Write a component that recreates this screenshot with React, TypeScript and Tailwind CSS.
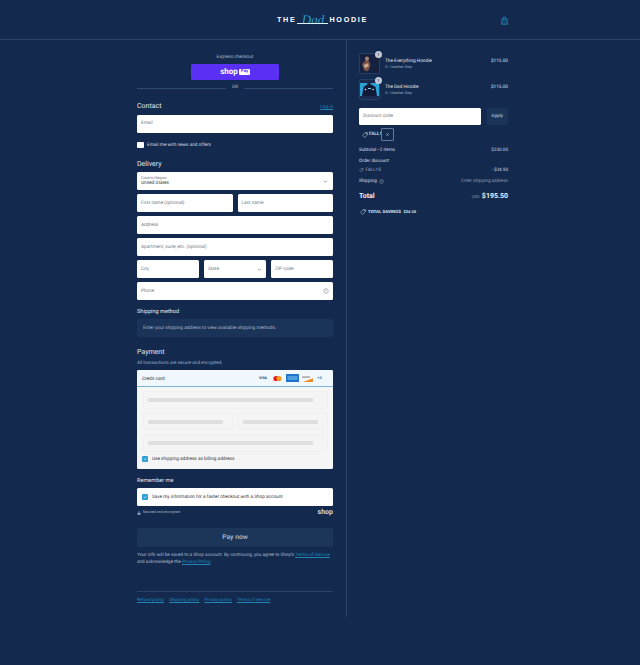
import React from "react";

const font = "font-['Roboto','Liberation_Sans',sans-serif]";

function Field({ label, className = "", children }: { label?: string; className?: string; children?: React.ReactNode }) {
  return (
    <div className={`h-[17.5px] bg-white rounded-[1.5px] flex items-center justify-between px-[4px] text-[4.7px] leading-[6px] text-[#73777d] ${className}`}>
      <span className="pt-[1px]">{label}</span>
      {children}
    </div>
  );
}

function Chevron() {
  return (
    <svg width="5" height="5" viewBox="0 0 10 10" fill="none" stroke="#777" strokeWidth="1.4">
      <path d="M2 3.5 5 6.5 8 3.5" />
    </svg>
  );
}

function Tag({ color = "#cdd6e4", size = 5 }: { color?: string; size?: number }) {
  return (
    <svg width={size} height={size} viewBox="0 0 12 12" fill="none" stroke={color} strokeWidth="1.1">
      <path d="M6.5 1.2h4.3v4.3L5.4 10.9 1.1 6.6z" />
      <circle cx="8.6" cy="3.4" r=".7" />
    </svg>
  );
}

function Check() {
  return (
    <span className="w-[6px] h-[6px] shrink-0 rounded-[1px] bg-[#2f9fd8] flex items-center justify-center">
      <svg width="4" height="4" viewBox="0 0 10 10" fill="none" stroke="#fff" strokeWidth="1.6">
        <path d="M2 5.2 4.2 7.4 8.2 2.8" />
      </svg>
    </span>
  );
}

function Skeleton({ w, className = "" }: { w: string; className?: string }) {
  return (
    <div className={`h-[17.5px] border border-[#f0f0f0] rounded-[1.5px] flex items-center px-[4px] ${className}`}>
      <div className={`h-[4px] bg-[#dfdfdf] rounded-[1px] ${w}`} />
    </div>
  );
}

function Item({ name, badge, thumb }: { name: string; badge: string; thumb: React.ReactNode }) {
  return (
    <div className="flex items-start h-[26px]">
      <div className="relative w-[21px] h-[21px] border border-[#23406b] rounded-[1.5px]">
        {thumb}
        <span className="absolute -top-[3px] -right-[3px] w-[7px] h-[7px] rounded-full bg-[#c3cad4] text-[#33415a] text-[4px] leading-[7px] text-center font-semibold">
          {badge}
        </span>
      </div>
      <div className="ml-[5px] mt-[5px] flex-1">
        <div className="text-[4.7px] leading-[7px] text-[#e3e8f0]">{name}</div>
        <div className="text-[3.7px] leading-[5px] text-[#9aa8bd] mt-[0.5px]">S / Heather Grey</div>
      </div>
      <div className="mt-[5px] text-[4.7px] leading-[7px] text-[#dfe5ee]">$115.00</div>
    </div>
  );
}

function SumRow({ left, right, className = "" }: { left: React.ReactNode; right: React.ReactNode; className?: string }) {
  return (
    <div className={`flex justify-between items-center text-[4.6px] leading-[7px] ${className}`}>
      <span className="flex items-center gap-[2px]">{left}</span>
      <span>{right}</span>
    </div>
  );
}

export default function App() {
  return (
    <div className={`w-[640px] h-[665px] bg-[#132a4e] text-[#dbe2ec] overflow-hidden [text-rendering:geometricPrecision] ${font}`}>
      {/* Header */}
      <header className="relative h-[40px] border-b border-[#2a4468] flex items-center justify-center pl-[5px]">
        <div className="flex items-center text-white font-bold text-[7.2px] tracking-[1.7px] leading-none font-['Liberation_Sans',sans-serif]">
          <span>THE</span>
          <span className="relative w-[31px] mx-[1px] h-[16px] flex items-center justify-center">
            <span className="font-['Liberation_Serif',serif] italic font-normal text-[13px] tracking-normal text-[#2c9ccb]">Dad</span>
            <span className="absolute left-0 right-0 top-[11.5px] h-[0.7px] bg-[#dff2fb]" />
          </span>
          <span>HOODIE</span>
        </div>
        <svg className="absolute left-[500.5px] top-[15.5px]" width="7" height="9" viewBox="0 0 14 18" fill="none" stroke="#1f86b9" strokeWidth="1.5">
          <path d="M1.8 5.5h10.4l.8 11H1z" fill="#1f86b9" fillOpacity=".3" />
          <path d="M4.5 7V3.8a2.5 2.5 0 0 1 5 0V7" />
        </svg>
      </header>

      <div className="flex h-[577px]">
        {/* Left column */}
        <main className="w-[347px] pl-[137px] pr-[13px] border-r border-[#2a4468]">
          <div className="text-center text-[4.7px] leading-[7px] text-[#aeb9c9] mt-[13.5px]">Express checkout</div>
          <div className="mx-auto mt-[3.5px] w-[88px] h-[16px] rounded-[1.5px] bg-[#5a31f4] flex items-center justify-center gap-[1.5px]">
            <span className="text-white font-bold text-[8px] leading-none">shop</span>
            <span className="bg-white text-[#5a31f4] rounded-[1px] px-[1.5px] text-[4.5px] leading-[6px] font-bold">Pay</span>
          </div>
          <div className="flex items-center gap-[6px] mt-[5px] h-[7px]">
            <div className="flex-1 h-px bg-[#2f4a70]" />
            <span className="text-[4.7px] leading-none text-[#aeb9c9]">OR</span>
            <div className="flex-1 h-px bg-[#2f4a70]" />
          </div>

          <div className="flex justify-between items-end mt-[9px] h-[10px]">
            <span className="text-[7px] leading-[10px] text-[#e3e8f0]">Contact</span>
            <span className="text-[4.7px] leading-[7px] underline text-[#1f86b9]">Log in</span>
          </div>
          <Field label="Email" className="mt-[4px]" />
          <div className="flex items-center mt-[9px] h-[7px] gap-[3.5px]">
            <span className="w-[6.5px] h-[6.5px] rounded-[1px] bg-white" />
            <span className="text-[4.7px] leading-[6px] pt-[1px] text-[#d5dce7]">Email me with news and offers</span>
          </div>

          <div className="text-[7px] leading-[10px] text-[#e3e8f0] mt-[10.5px]">Delivery</div>
          <div className="mt-[3.3px] h-[17.5px] bg-white rounded-[1.5px] flex items-center justify-between pl-[4px] pr-[5px]">
            <div>
              <div className="text-[3.7px] leading-[4.5px] text-[#73777d]">Country/Region</div>
              <div className="text-[4.7px] leading-[5.5px] text-[#333]">United States</div>
            </div>
            <Chevron />
          </div>
          <div className="flex gap-[5px] mt-[4.5px]">
            <Field label="First name (optional)" className="flex-1" />
            <Field label="Last name" className="flex-1" />
          </div>
          <Field label="Address" className="mt-[4.5px]" />
          <Field label="Apartment, suite, etc. (optional)" className="mt-[4.5px]" />
          <div className="flex gap-[5px] mt-[4.5px]">
            <Field label="City" className="flex-1" />
            <Field label="State" className="flex-1"><Chevron /></Field>
            <Field label="ZIP code" className="flex-1" />
          </div>
          <Field label="Phone" className="mt-[4.5px]">
            <svg width="6" height="6" viewBox="0 0 12 12" fill="none" stroke="#777" strokeWidth="1">
              <circle cx="6" cy="6" r="4.6" />
              <path d="M6 3.2v3.4M6 8v.8" />
            </svg>
          </Field>

          <div className="text-[5.6px] leading-[8px] text-[#e3e8f0] mt-[8px]">Shipping method</div>
          <div className="mt-[3px] h-[18px] rounded-[1.5px] bg-[#1a3358] flex items-center px-[6px] text-[4.7px] text-[#a9b6c9]">
            <span className="pt-[1px]">Enter your shipping address to view available shipping methods.</span>
          </div>

          <div className="text-[7px] leading-[10px] text-[#e3e8f0] mt-[10.5px]">Payment</div>
          <div className="text-[4.6px] leading-[7px] text-[#9fadc1] mt-[2.5px]">All transactions are secure and encrypted.</div>

          <div className="mt-[3.5px] h-[98.5px] rounded-[1.5px] bg-[#f5f5f5] overflow-hidden">
            <div className="h-[17px] bg-[#f0f8fd] border-b border-[#72b5d6] flex items-center justify-between pl-[5px] pr-[8px]">
              <span className="text-[4.7px] text-[#333] pt-[1.5px]">Credit card</span>
              <div className="flex items-center gap-[1.5px]">
                <span className="w-[11px] text-center text-[#2b3a70] text-[3.6px] font-bold mr-[2px]">VISA</span>
                <svg width="11" height="7" viewBox="0 0 11 7" className="mr-[1.5px]">
                  <circle cx="4" cy="3.5" r="2.6" fill="#e0161e" />
                  <circle cx="7" cy="3.5" r="2.6" fill="#f59a1e" />
                </svg>
                <svg width="13" height="8" viewBox="0 0 13 8">
                  <rect width="13" height="8" rx=".6" fill="#1f72cd" />
                  <rect x="1.5" y="2" width="10" height="4" fill="#4f9fdd" />
                </svg>
                <svg width="12" height="8" viewBox="0 0 12 8">
                  <rect width="12" height="8" rx=".6" fill="#f7f7f7" />
                  <rect x="1" y="2.4" width="8" height="1.3" fill="#9a9a9a" />
                  <path d="M2 8 12 4.2V8z" fill="#ef8a2c" />
                </svg>
                <span className="w-[11px] text-center text-[#2f8fbd] text-[4px] font-semibold">+4</span>
              </div>
            </div>
            <div className="px-[5.5px] pt-[4px]">
              <Skeleton w="w-[165px]" />
              <div className="flex gap-[5px] mt-[4px]">
                <Skeleton w="w-[75px]" className="flex-1" />
                <Skeleton w="w-[75px]" className="flex-1" />
              </div>
              <Skeleton w="w-[165px]" className="mt-[4px]" />
              <div className="flex items-center gap-[4px] mt-[3.5px] -ml-[0.5px] h-[8px]">
                <Check />
                <span className="text-[4.7px] leading-[6px] text-[#333] pt-[1.5px]">Use shipping address as billing address</span>
              </div>
            </div>
          </div>

          <div className="text-[5.6px] leading-[8px] text-[#e3e8f0] mt-[8.3px]">Remember me</div>
          <div className="mt-[3px] h-[17.5px] bg-white rounded-[1.5px] flex items-center gap-[4px] pl-[5px] text-[4.7px] text-[#333]">
            <Check />
            <span className="pt-[1.5px]">Save my information for a faster checkout with a Shop account</span>
          </div>
          <div className="flex items-center justify-between mt-[2px] h-[9px]">
            <div className="flex items-center gap-[1.5px] text-[3.7px] text-[#9fadc1] pt-[2px]">
              <svg width="4" height="4" viewBox="0 0 10 10" fill="#9fadc1">
                <rect x="1.5" y="4.2" width="7" height="5" rx=".6" />
                <path d="M3 4.5V3a2 2 0 0 1 4 0v1.5" fill="none" stroke="#9fadc1" strokeWidth="1" />
              </svg>
              <span>Secured and encrypted</span>
            </div>
            <span className="text-[7px] font-semibold text-[#d9e0ea] leading-none">shop</span>
          </div>
          <div className="mt-[11.5px] h-[18.5px] rounded-[1.5px] bg-[#1b3659] flex items-center justify-center text-[6.8px] font-semibold text-[#a9b6c9]">
            Pay now
          </div>
          <p className="mt-[5px] text-[4.65px] leading-[7.2px] text-[#a9b6c9] whitespace-nowrap">
            Your info will be saved to a Shop account. By continuing, you agree to Shop’s{" "}
            <span className="underline text-[#1f86b9]">Terms of Service</span>
            <br />
            and acknowledge the <span className="underline text-[#1f86b9]">Privacy Policy</span>.
          </p>
          <div className="mt-[25px] border-t border-[#2a4468] pt-[4.5px] flex gap-[5px] text-[4.5px] leading-[7px] underline text-[#1f86b9]">
            <span>Refund policy</span>
            <span>Shipping policy</span>
            <span>Privacy policy</span>
            <span>Terms of service</span>
          </div>
        </main>

        {/* Right column */}
        <aside className="w-[149px] ml-[12px] pt-[12.5px]">
          <Item
            name="The Everything Hoodie"
            badge="1"
            thumb={
              <svg width="19" height="19" viewBox="0 0 19 19">
                <rect width="19" height="19" fill="#15213f" />
                <ellipse cx="7" cy="4.8" rx="2" ry="2.3" fill="#a98272" />
                <path d="M2 10 5.5 6.8h3l2 3.2-1.5 5.5L7 17.5l-3-1.5z" fill="#7b5248" />
                <path d="M3.5 11l4-1.8 1.5 3-4 2z" fill="#c9a693" />
              </svg>
            }
          />
          <Item
            name="The Dad Hoodie"
            badge="1"
            thumb={
              <svg width="19" height="19" viewBox="0 0 19 19">
                <rect width="19" height="19" fill="#1b2a4e" />
                <rect y="3" width="19" height="13" fill="#2ba5d6" />
                <path d="M2 16 3.5 7l3.5-2.5h4.5L15.5 7l1.5 9z" fill="#121a38" />
                <circle cx="9" cy="4" r="1.8" fill="#1c2440" />
                <circle cx="5.5" cy="9.5" r=".8" fill="#dfe6f0" />
                <circle cx="13" cy="9.5" r=".8" fill="#dfe6f0" />
                <rect x="8" y="8" width="3" height="1" fill="#7cc7e6" />
              </svg>
            }
          />
          <div className="flex gap-[5.5px] mt-[3px]">
            <Field label="Discount code" className="w-[122px] !h-[17px]" />
            <div className="flex-1 h-[17px] rounded-[1.5px] bg-[#1a3358] flex items-center justify-center text-[4.7px] font-medium text-[#a9b6c9]">
              <span className="pt-[1px]">Apply</span>
            </div>
          </div>
          <div className="flex items-center mt-[3.5px] ml-[3px] h-[13px]">
            <Tag size={6} />
            <span className="text-[4.7px] font-medium text-[#dfe5ee] ml-[1px] w-[12px] shrink-0 whitespace-nowrap pt-[1px]">FALL1</span>
            <span className="w-[13px] h-[13px] border border-[#63789a] rounded-[1px] flex items-center justify-center">
              <svg width="5" height="5" viewBox="0 0 10 10" stroke="#dfe5ee" strokeWidth="1">
                <path d="M2.5 2.5 7.5 7.5M7.5 2.5 2.5 7.5" />
              </svg>
            </span>
          </div>
          <SumRow left="Subtotal • 2 items" right="$230.00" className="mt-[6px] text-[#d5dce7]" />
          <div className="text-[4.6px] leading-[7px] text-[#d5dce7] mt-[3.6px]">Order discount</div>
          <SumRow left={<><Tag size={4.5} color="#9fadc1" /><span>FALL15</span></>} right={<span className="text-[#d5dce7]">- $34.50</span>} className="text-[#9fadc1] mt-[2.2px]" />
          <SumRow
            left={<><span className="text-[#d5dce7]">Shipping</span>
              <svg width="5" height="5" viewBox="0 0 12 12" fill="none" stroke="#9fadc1" strokeWidth="1.1">
                <circle cx="6" cy="6" r="4.6" /><path d="M6 3.2v3.4M6 8v.8" />
              </svg></>}
            right="Enter shipping address"
            className="text-[#8d9db3] mt-[3.8px]"
          />
          <div className="flex justify-between items-center mt-[6.9px] h-[10px]">
            <span className="text-[7px] font-bold text-[#eef2f7]">Total</span>
            <span className="flex items-baseline gap-[2.5px]">
              <span className="text-[4px] text-[#8d9db3]">USD</span>
              <span className="text-[7px] font-bold text-[#eef2f7]">$195.50</span>
            </span>
          </div>
          <div className="flex items-center mt-[7.5px] h-[7px] gap-[2.5px] text-[4.4px] leading-[7px] font-bold text-[#dfe5ee] ml-[0.5px]">
            <Tag size={6} />
            <span className="flex items-baseline gap-[2.5px]">
              <span>TOTAL SAVINGS</span>
              <span className="text-[4px]">$34.50</span>
            </span>
          </div>
        </aside>
      </div>
    </div>
  );
}
